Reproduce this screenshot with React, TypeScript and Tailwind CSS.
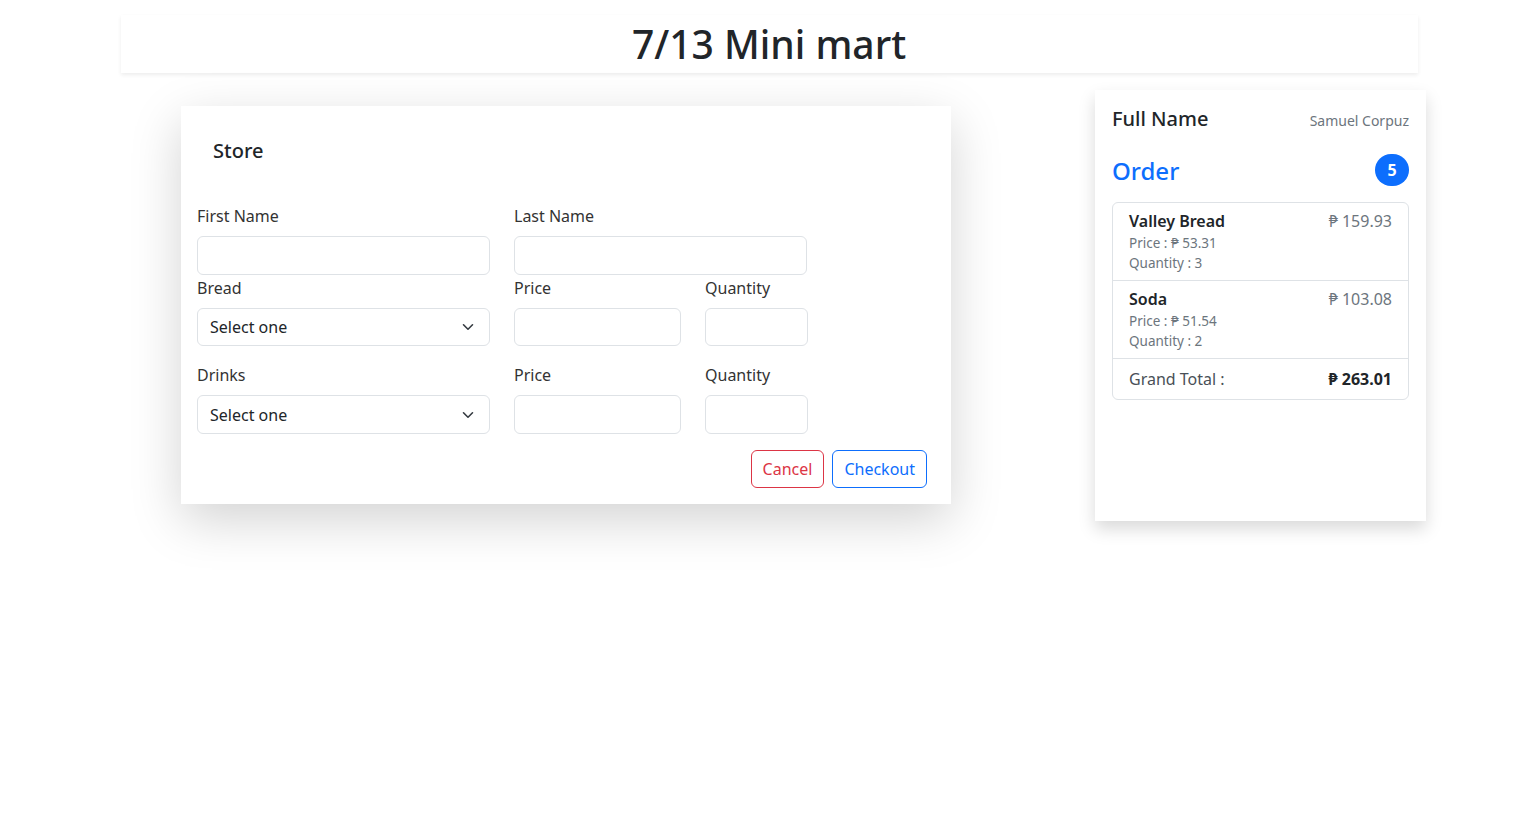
import React from "react";

const FONT = { fontFamily: '"Noto Sans", "Open Sans", "DejaVu Sans", sans-serif' };

function Label({ children }: { children: React.ReactNode }) {
  return <label className="mb-2 block text-base leading-6 text-[#333]">{children}</label>;
}

function Input({ w, h = "h-[38px]" }: { w: string; h?: string }) {
  return (
    <input
      type="text"
      className={`${w} ${h} block rounded-md border border-[#dee2e6] bg-white px-3 text-base outline-none`}
    />
  );
}

function Select({ label, h = "h-[38px]" }: { label: string; h?: string }) {
  return (
    <div className="w-[293px]">
      <Label>{label}</Label>
      <div className={`${h} flex items-center justify-between rounded-md border border-[#dee2e6] bg-white pl-3 pr-[15px] text-base text-[#212529]`}>
        <span>Select one</span>
        <svg width="12" height="8" viewBox="0 0 12 8" fill="none">
          <path d="M1.5 1.8 6 6.2l4.5-4.4" stroke="#343a40" strokeWidth="1.6" strokeLinecap="round" strokeLinejoin="round" />
        </svg>
      </div>
    </div>
  );
}

function ItemRow({
  name,
  price,
  qty,
  total,
}: {
  name: string;
  price: string;
  qty: number;
  total: string;
}) {
  return (
    <div className="flex justify-between border-b border-[#dee2e6] px-4 pb-[7px] pt-[6px]">
      <div>
        <div className="text-base font-semibold leading-6 text-[#212529]">{name}</div>
        <div className="text-[13.5px] leading-[20px] text-[#6c757d]">Price : ₱ {price}</div>
        <div className="text-[13.5px] leading-[20px] text-[#6c757d]">Quantity : {qty}</div>
      </div>
      <div className="text-base leading-6 text-[#6c757d]">₱ {total}</div>
    </div>
  );
}

export default function App() {
  return (
    <div className="min-h-screen bg-white pt-[15px]" style={FONT}>
      {/* header */}
      <div className="mx-auto flex h-[58px] w-[1297px] items-center justify-center bg-white shadow-[0_2px_4px_rgba(0,0,0,0.075)]">
        <h1 className="text-[39px] font-medium leading-[48px] text-[#212529]">7/13 Mini mart</h1>
      </div>

      <div className="flex items-start pl-[181px]">
        {/* store card */}
        <div className="mt-[33px] w-[770px] bg-white px-4 pb-4 pt-[33px] shadow-[0_16px_48px_rgba(0,0,0,0.175)]">
          <h5 className="mb-[41px] pl-4 text-xl font-medium leading-6 text-[#212529]">Store</h5>

          <div className="flex gap-6">
            <div className="w-[293px]">
              <Label>First Name</Label>
              <Input w="w-[293px]" h="h-[39px]" />
            </div>
            <div className="w-[293px]">
              <Label>Last Name</Label>
              <Input w="w-[293px]" h="h-[39px]" />
            </div>
          </div>

          <div className="mt-px flex gap-6">
            <Select label="Bread" />
            <div>
              <Label>Price</Label>
              <Input w="w-[167px]" />
            </div>
            <div>
              <Label>Quantity</Label>
              <Input w="w-[103px]" />
            </div>
          </div>

          <div className="mt-[17px] flex gap-6">
            <Select label="Drinks" h="h-[39px]" />
            <div>
              <Label>Price</Label>
              <Input w="w-[167px]" h="h-[39px]" />
            </div>
            <div>
              <Label>Quantity</Label>
              <Input w="w-[103px]" h="h-[39px]" />
            </div>
          </div>

          <div className="mt-[16px] flex justify-end gap-2 pr-2">
            <button className="h-[38px] rounded-md border border-[#dc3545] px-[11px] text-base text-[#dc3545]">
              Cancel
            </button>
            <button className="h-[38px] rounded-md border border-[#0d6efd] px-[11px] text-base text-[#0d6efd]">
              Checkout
            </button>
          </div>
        </div>

        {/* order card */}
        <div className="ml-[144px] mt-[17px] h-[431px] w-[331px] bg-white px-[17px] pt-[17px] shadow-[0_8px_16px_rgba(0,0,0,0.15)]">
          <div className="flex items-end justify-between">
            <h5 className="text-xl font-medium leading-6 text-[#212529]">Full Name</h5>
            <span className="text-sm leading-5 text-[#6c757d]">Samuel Corpuz</span>
          </div>

          <div className="mt-[23px] flex items-center justify-between">
            <h4 className="text-2xl font-medium leading-[29px] text-[#0d6efd]">Order</h4>
            <span className="flex h-[32px] w-[34px] items-center justify-center rounded-full bg-[#0d6efd] text-base font-bold text-white">
              5
            </span>
          </div>

          <div className="mt-[16px] overflow-hidden rounded-md border border-[#dee2e6]">
            <ItemRow name="Valley Bread" price="53.31" qty={3} total="159.93" />
            <ItemRow name="Soda" price="51.54" qty={2} total="103.08" />
            <div className="flex justify-between px-4 py-2 text-base leading-6">
              <span className="text-[#495057]">Grand Total :</span>
              <span className="font-bold text-[#212529]">₱ 263.01</span>
            </div>
          </div>
        </div>
      </div>
    </div>
  );
}
